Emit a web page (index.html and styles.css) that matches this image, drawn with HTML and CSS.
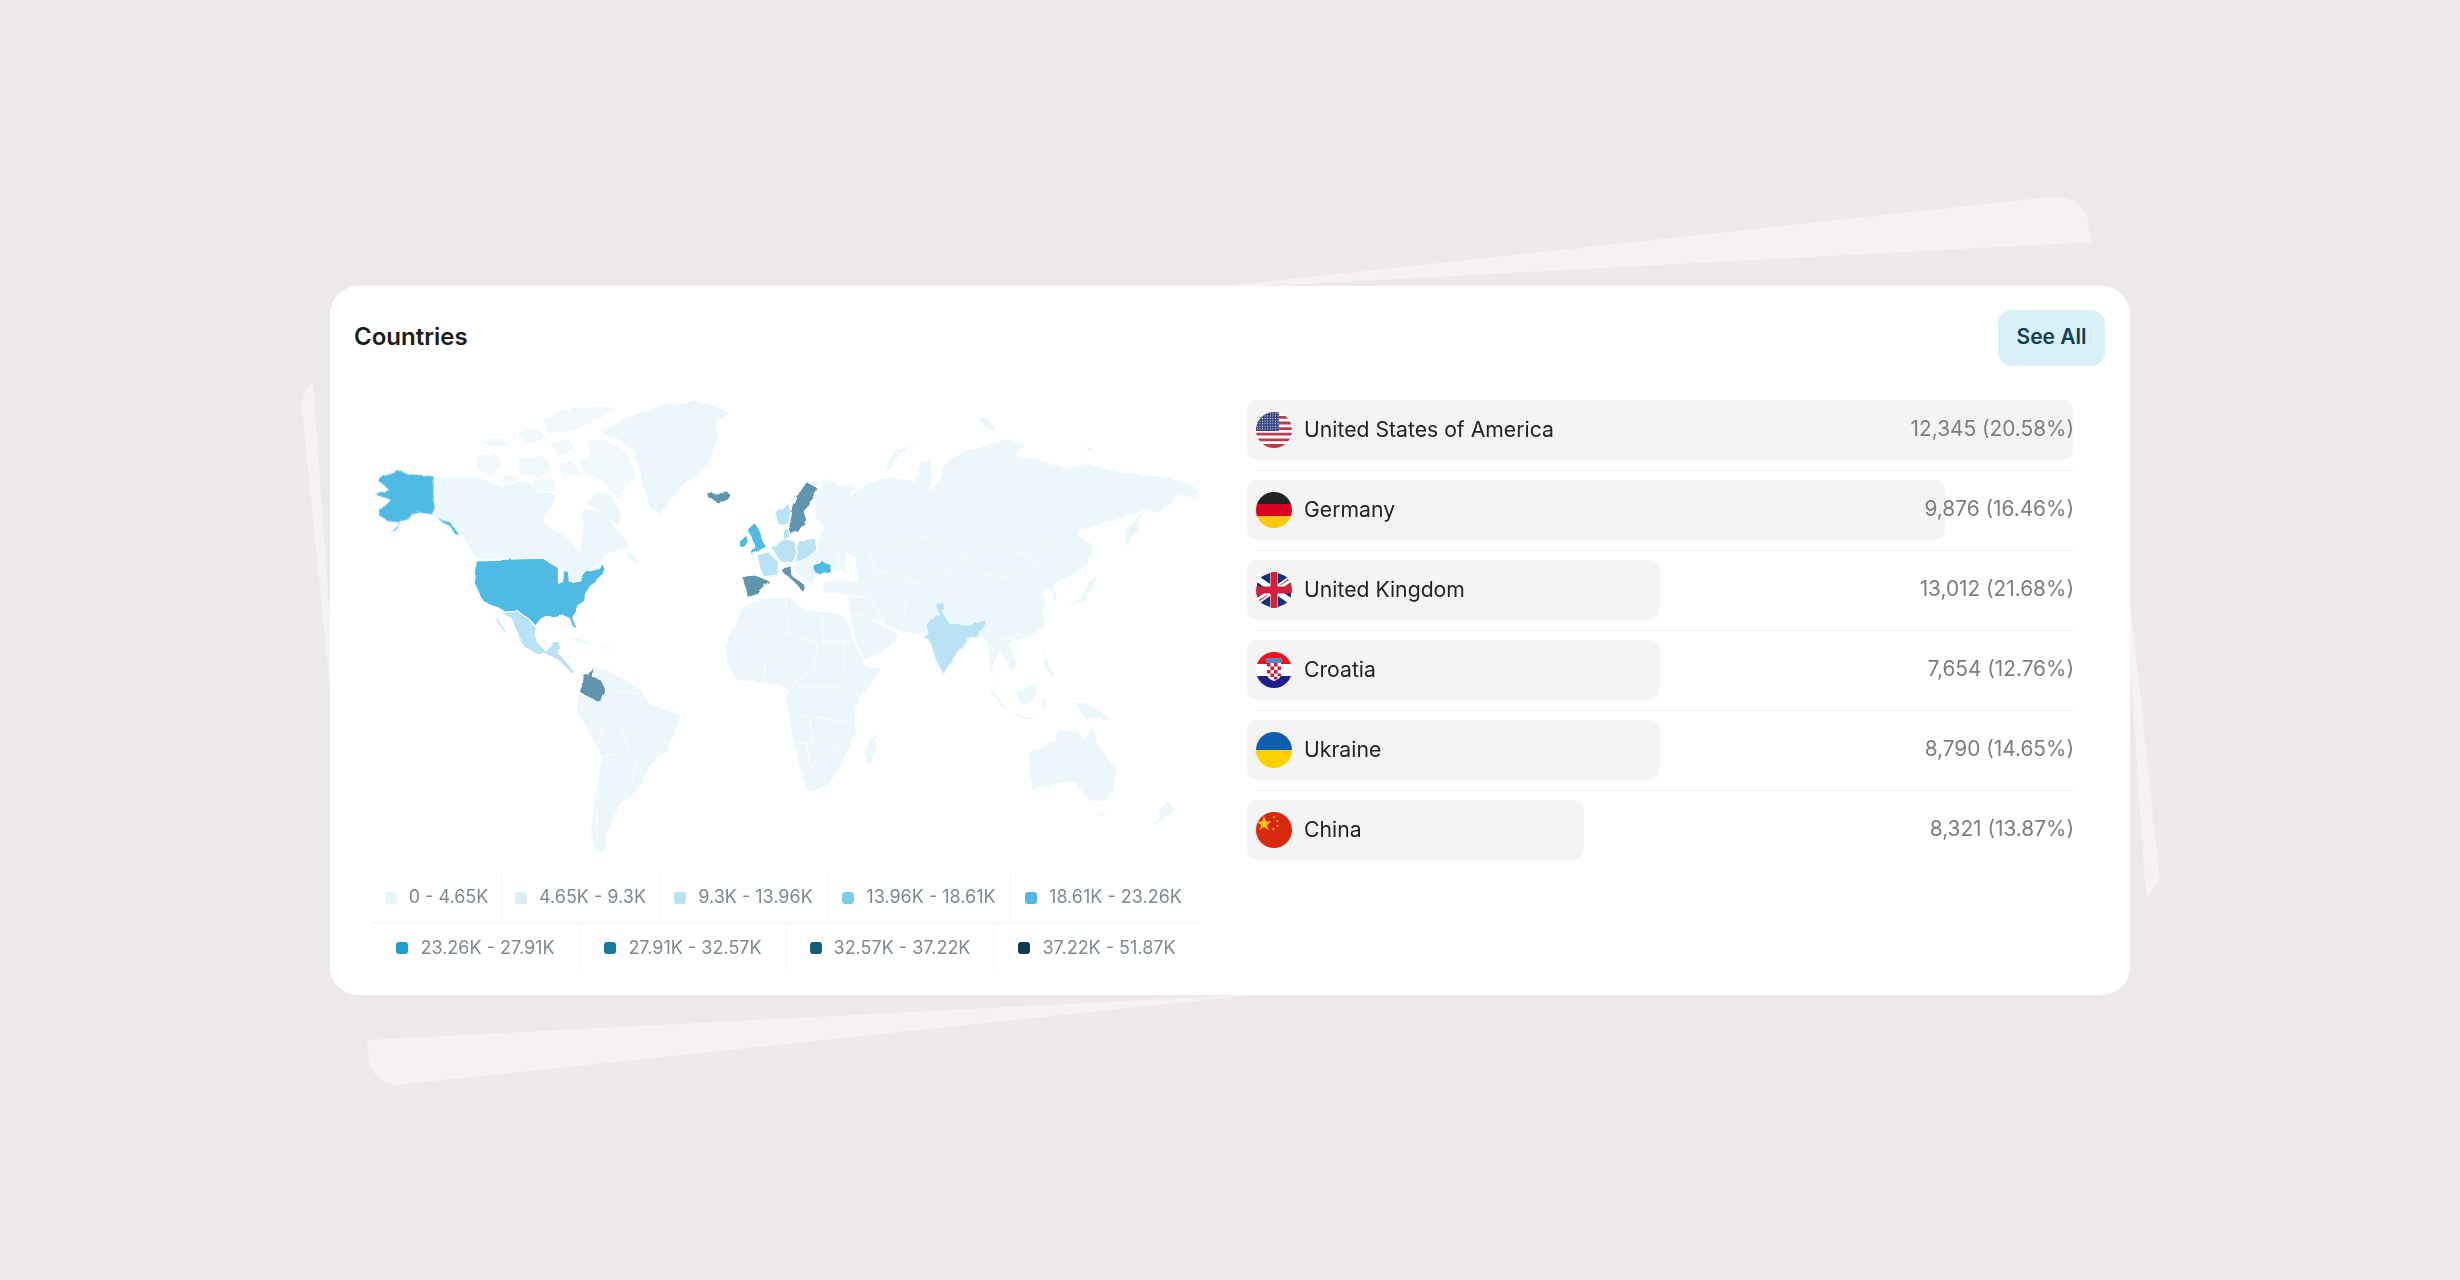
FILE: index.html

```html
<!DOCTYPE html>
<html lang="en">
<head>
  <meta charset="UTF-8" />
  <title>Countries</title>
  <link rel="stylesheet" href="styles.css">
</head>
<body>
  <!-- rotated sheets peeking out behind the card -->
  <svg class="backdrop" viewBox="0 0 2460 1280" aria-hidden="true">
    <path d="M1190 290 L2050 197 Q2084 194 2089 226 L2092 242 Z" />
    <path d="M330 690 L302 410 Q301 390 313 383 L330 620 Z" />
    <path d="M2130 600 L2159 870 Q2160 885 2146 898 L2130 660 Z" />
    <path d="M1262 994 L367 1040 L369 1060 Q372 1080 395 1085 Z" />
  </svg>

  <main class="card">
    <header class="card-head">
      <h1>Countries</h1>
      <button class="see-all">See All</button>
    </header>

    <div class="card-body">
      <section class="map-col">
        <svg class="world-map" viewBox="372 400 828 463" role="img" aria-label="World map">
          <defs>
            <filter id="coast" x="360" y="390" width="850" height="485" filterUnits="userSpaceOnUse">
              <feTurbulence type="fractalNoise" baseFrequency="0.09" numOctaves="2" seed="4" />
              <feDisplacementMap in="SourceGraphic" scale="4" />
              <feGaussianBlur stdDeviation="0.45" />
            </filter>
          </defs>

          <g filter="url(#coast)">
            <!-- north atlantic side -->
            <g transform="translate(430 395) scale(.3333)">
              <g class="land l0">
                <polygon points="515,115 580,70 690,30 800,15 905,50 860,80 865,130 840,200 790,250 720,310 690,360 660,340 640,280 610,170 570,135" />
                <polygon points="15,245 130,245 210,270 290,260 340,285 380,300 375,325 340,360 345,385 400,420 425,440 445,465 458,420 462,395 450,350 490,340 520,345 545,380 575,420 605,455 555,465 530,480 515,505 470,530 450,555 418,560 415,530 385,518 362,505 340,490 135,490 100,430 80,410 50,380 15,365" />
                <polygon points="470,330 500,290 540,300 570,340 570,400 545,380 510,345" />
                <polygon points="590,470 615,480 625,505 595,495" />
                <polygon points="400,725 450,730 500,750 450,745" />
                <polygon points="510,755 540,755 540,765" />
                <polygon points="935,555 945,570 952,605 940,600" />
              </g>
              <g class="land arctic">
                <polygon points="340,70 430,35 555,35 500,75 450,100 400,115 350,110" />
                <polygon points="470,140 520,130 590,170 620,250 560,310 520,260 470,240 440,200 480,180" />
                <polygon points="260,190 340,180 370,220 330,250 270,240" />
                <polygon points="135,185 200,175 220,210 180,240 140,220" />
                <polygon points="150,140 210,125 250,150 190,160" />
                <polygon points="260,110 320,95 350,130 290,150" />
                <polygon points="360,140 420,130 440,170 380,180" />
                <polygon points="380,200 430,200 450,240 400,250" />
                <polygon points="230,230 260,250 240,270 210,260" />
                <polygon points="300,260 370,250 380,290 320,290" />
              </g>
              <g class="land l2">
                <polygon points="187,645 230,650 265,650 295,670 315,695 320,740 345,765 370,740 390,740 385,775 410,800 440,840 425,835 390,800 345,775 325,780 280,755 265,720 245,670 210,650" />
                <polygon points="190,650 215,690 235,720 225,715 200,680" />
              </g>
              <g class="land l4">
                <polygon points="135,495 340,490 362,505 385,518 385,565 398,560 402,525 415,530 418,560 450,555 470,530 510,520 515,505 525,520 520,535 495,560 480,575 465,600 468,620 440,640 425,665 440,695 432,700 418,670 395,660 370,665 345,665 320,680 315,690 295,670 265,650 230,650 190,635 155,615 145,590 133,565 138,520" />
                <polygon points="960,395 975,383 985,400 1000,440 1010,455 975,475 960,480 975,455 965,425 955,410" />
                <polygon points="928,440 950,420 955,440 945,455 930,460" />
              </g>
              <g class="land dim">
                <polygon points="935,545 975,540 1020,558 985,590 978,600 952,608 945,570" />
                <polygon points="830,295 845,290 850,295 890,288 903,300 895,315 865,327 845,312 833,308" />
              </g>
            </g>

            <!-- alaska -->
            <g class="land l4" transform="translate(280 350) scale(.3333)">
              <polygon points="360,360 385,370 462,378 462,498 440,495 415,487 400,490 385,510 360,515 345,540 302,565 330,545 355,518 325,515 298,500 295,480 320,462 330,450 300,440 282,433 300,425 325,420 310,405 292,392 315,375 340,368" />
              <polygon points="462,498 490,510 510,515 540,555 525,555 510,530 490,520" />
            </g>

            <!-- asia -->
            <g transform="translate(850 410) scale(.3333)">
              <g class="land l0">
                <polygon points="0,265 60,215 130,200 195,215 210,160 240,150 250,200 240,240 265,215 285,160 330,130 400,105 470,85 525,105 490,140 560,145 650,175 720,160 800,185 880,195 960,200 1020,225 1055,245 1030,265 990,255 960,280 930,310 890,300 830,320 700,360 685,380 725,400 730,440 690,480 640,510 610,530 625,575 610,570 600,535 570,545 590,570 580,600 585,650 540,680 480,700 500,770 480,780 450,720 430,770 430,820 470,890 440,830 420,780 410,700 395,680 355,700 320,730 280,795 245,710 225,670 160,670 100,640 60,590 20,570 0,560 -30,550 -80,550 -85,520 -40,505 -10,510 0,500 -30,480 -90,480 -105,500 -115,525 -135,510 -168,486 -165,459 -99,420 -96,381 -75,351 -100,330 -110,260 -75,205 -40,220 20,235" />
                <polygon points="650,590 700,560 720,510 745,490 725,540 710,570 660,590" />
                <polygon points="825,400 830,360 880,300 860,360 835,410" />
                <polygon points="105,180 140,120 215,95 150,130 125,180" />
                <polygon points="380,25 410,20 440,60 410,55" />
                <polygon points="695,110 740,115 720,125" />
                <polygon points="990,180 1005,178 1000,185" />
              </g>
              <g class="borders">
                <polyline points="60,430 160,400 225,380 280,410 340,440 310,470 260,500 200,520 150,480 100,490 70,470 60,430" />
                <polyline points="345,440 430,410 530,435 570,460 520,480 460,505 400,490 370,470 345,440" />
                <polyline points="530,435 590,400 620,410 660,460 640,500" />
                <polyline points="20,540 90,480 130,510 200,520" />
                <polyline points="120,540 165,570 160,650" />
                <polyline points="40,560 70,600 110,640" />
                <polyline points="250,530 300,480" />
                <polyline points="390,640 450,690 540,670" />
                <polyline points="430,690 470,770" />
                <polyline points="-96,381 -40,400 -30,480" />
                <polyline points="-60,440 0,470" />
              </g>
              <polygon class="water" points="-10,430 15,440 25,515 0,520 -15,480" />
              <g class="land l2">
                <polygon points="255,580 280,578 285,595 275,605 300,640 355,645 405,628 410,640 385,680 355,690 325,725 300,760 280,795 255,745 240,695 218,680 235,670 225,645 265,610" />
              </g>
            </g>

            <!-- southern continents -->
            <g transform="translate(560 590) scale(.357 .3333)">
              <g class="land l0">
                <polygon points="95,235 135,240 175,265 230,300 250,340 340,375 320,430 300,480 250,530 235,570 200,620 170,640 130,730 125,790 100,785 85,730 95,620 115,500 90,445 45,360 50,320" />
                <polygon points="510,50 570,25 640,20 690,60 770,70 800,80 830,170 855,225 900,235 875,280 840,320 825,370 830,430 780,540 750,590 695,605 670,530 650,440 630,320 640,300 605,285 540,275 500,275 465,220 465,150" />
                <polygon points="810,70 870,85 950,135 935,165 850,215 830,160" />
                <polygon points="805,20 868,20 900,80 875,90 810,70" />
                <polygon points="890,425 885,470 875,520 852,520 855,470" />
                <polygon points="1195,285 1230,320 1255,365 1240,355 1210,315" />
                <polygon points="1260,370 1340,385 1300,390" />
                <polygon points="1280,310 1335,275 1330,330 1290,345" />
                <polygon points="1345,320 1365,325 1355,365" />
                <polygon points="1430,330 1490,345 1555,395 1510,385 1470,385 1450,350" />
                <polygon points="1355,175 1365,210 1385,250 1380,270 1355,225" />
                <polygon points="1085,255 1095,265 1085,270" />
                <polygon points="1310,490 1380,450 1395,420 1450,420 1465,450 1490,410 1510,470 1560,540 1550,600 1525,635 1480,635 1445,580 1400,575 1320,605" />
                <polygon points="1510,665 1530,665 1520,682" />
              </g>
              <g class="borders">
                <polyline points="90,370 130,395 170,400 190,470 215,530 180,630" />
                <polyline points="115,440 120,395" />
                <polyline points="115,500 170,490 215,530" />
                <polyline points="130,300 210,310 240,310" />
                <polyline points="90,370 105,340" />
                <polyline points="115,500 100,650 105,760" />
                <polyline points="510,100 600,170 575,215 575,280" />
                <polyline points="630,20 640,125 600,170" />
                <polyline points="640,125 720,160 710,240 665,270 630,320" />
                <polyline points="735,60 735,150 800,150" />
                <polyline points="720,160 800,150 790,240 830,290" />
                <polyline points="665,290 790,290 840,320" />
                <polyline points="650,370 700,380 710,460 650,460" />
                <polyline points="710,380 820,400 800,450 700,530 690,460" />
                <polyline points="760,450 780,500" />
              </g>
              <g class="land dim">
                <polygon points="97,228 85,245 62,255 58,310 85,325 112,340 127,295 115,270 90,260" />
              </g>
            </g>

            <!-- europe and the far south east -->
            <g transform="translate(340 380) scale(.5485 .3333)">
              <g class="land l0">
                <polygon points="826,372 845,325 880,305 900,275 880,300 850,305 836,335 818,372" />
                <polygon points="1480,1340 1508,1260 1522,1285 1500,1320" />
              </g>
              <g class="land l2">
                <polygon points="793,395 817,370 823,395 817,435 799,435" />
                <polygon points="787,505 811,475 829,485 833,520 823,545 802,545" />
                <polygon points="836,480 866,475 870,510 851,535 830,548 833,520" />
                <polygon points="760,525 781,515 799,545 799,585 772,590 766,560" />
                <polygon points="808,450 818,445 820,475 808,478" />
              </g>
              <g class="land l4">
                <polygon points="862,555 881,545 896,555 893,575 875,582 863,575" />
              </g>
              <g class="land dim">
                <polygon points="851,305 869,320 866,350 845,390 851,420 836,455 820,465 819,430 826,380 836,340" />
                <polygon points="803,565 823,558 826,590 848,615 842,638 836,620 820,595 808,580" />
              </g>
            </g>
          </g>
        </svg>

        <div class="legend">
          <div class="legend-row first">
            <span class="legend-item"><i class="swatch s1"></i>0 - 4.65K</span>
            <span class="legend-item"><i class="swatch s2"></i>4.65K - 9.3K</span>
            <span class="legend-item"><i class="swatch s3"></i>9.3K - 13.96K</span>
            <span class="legend-item"><i class="swatch s4"></i>13.96K - 18.61K</span>
            <span class="legend-item"><i class="swatch s5"></i>18.61K - 23.26K</span>
          </div>
          <div class="legend-row second">
            <span class="legend-item"><i class="swatch s6"></i>23.26K - 27.91K</span>
            <span class="legend-item"><i class="swatch s7"></i>27.91K - 32.57K</span>
            <span class="legend-item"><i class="swatch s8"></i>32.57K - 37.22K</span>
            <span class="legend-item"><i class="swatch s9"></i>37.22K - 51.87K</span>
          </div>
        </div>
      </section>

      <ul class="country-list">
        <li class="country">
          <div class="bar" style="width: 99.6%"></div>
          <div class="country-line">
            <svg class="flag" viewBox="0 0 36 36">
              <defs>
                <pattern id="stars" width="2.6" height="2.6" patternUnits="userSpaceOnUse"><circle cx="1.3" cy="1.3" r=".55" fill="#fff" /></pattern>
              </defs>
              <rect width="36" height="36" fill="#fff" />
              <path d="M0 4h36v2.800H0zM0 9.600h36v2.800H0zM0 15.200h36v2.800H0zM0 20.800h36v2.800H0zM0 26.400h36v2.800H0zM0 32h36v4H0z" fill="#c0384c" />
              <rect width="23" height="19" fill="#34447f" />
              <rect width="23" height="19" fill="url(#stars)" />
            </svg>
            <span class="name">United States of America</span>
            <span class="value">12,345 (20.58%)</span>
          </div>
        </li>
        <li class="country">
          <div class="bar" style="width: 84.2%"></div>
          <div class="country-line">
            <svg class="flag" viewBox="0 0 36 36">
              <rect width="36" height="12" fill="#222" />
              <rect y="12" width="36" height="12" fill="#d8001e" />
              <rect y="24" width="36" height="12" fill="#fcc80e" />
            </svg>
            <span class="name">Germany</span>
            <span class="value">9,876 (16.46%)</span>
          </div>
        </li>
        <li class="country">
          <div class="bar" style="width: 49.8%"></div>
          <div class="country-line">
            <svg class="flag" viewBox="0 0 36 36">
              <rect width="36" height="36" fill="#fff" />
              <path d="M4 5l10 7V1zM32 5l-10 7V1zM1 10l7 5H1zM35 10l-7 5h7zM4 31l10-7v11zM32 31l-10-7v11zM1 26l7-5H1zM35 26l-7-5h7z" fill="#12337a" />
              <path d="M0 21h7l-7 5zM36 15h-7l7-5zM24 13l8-6 1 1-8 5zM12 23l-8 6-1-1 8-5z" fill="#d0203a" />
              <rect x="14.500" width="7" height="36" fill="#d0203a" />
              <rect y="14.500" width="36" height="7" fill="#d0203a" />
            </svg>
            <span class="name">United Kingdom</span>
            <span class="value">13,012 (21.68%)</span>
          </div>
        </li>
        <li class="country">
          <div class="bar" style="width: 49.8%"></div>
          <div class="country-line">
            <svg class="flag" viewBox="0 0 36 36">
              <rect width="36" height="12" fill="#f01020" />
              <rect y="12" width="36" height="12" fill="#fff" />
              <rect y="24" width="36" height="12" fill="#1c1c8c" />
              <rect x="10" y="6" width="16" height="5" rx="1" fill="#5a86c4" />
              <path d="M11 11h14v11q0 5-7 7-7-2-7-7z" fill="#fff" />
              <path d="M11 11h3.500v3.500H11zM18 11h3.500v3.500H18zM14.500 14.500H18V18h-3.500zM21.500 14.500H25V18h-3.500zM11 18h3.500v3.500H11zM18 18h3.500v3.500H18zM14.500 21.500H18V25h-3.500zM21.500 21.500H25V24h-3.500zM18 25h3.500v2.500H18z" fill="#d81830" />
            </svg>
            <span class="name">Croatia</span>
            <span class="value">7,654 (12.76%)</span>
          </div>
        </li>
        <li class="country">
          <div class="bar" style="width: 49.8%"></div>
          <div class="country-line">
            <svg class="flag" viewBox="0 0 36 36">
              <rect width="36" height="18" fill="#0d5eaf" />
              <rect y="18" width="36" height="18" fill="#fdd000" />
            </svg>
            <span class="name">Ukraine</span>
            <span class="value">8,790 (14.65%)</span>
          </div>
        </li>
        <li class="country">
          <div class="bar" style="width: 40.6%"></div>
          <div class="country-line">
            <svg class="flag" viewBox="0 0 36 36">
              <rect width="36" height="36" fill="#d8290f" />
              <polygon points="8,4 9.800,9.500 15.500,9.500 10.900,12.900 12.600,18.300 8,15 3.400,18.300 5.100,12.900 .500,9.500 6.200,9.500" fill="#fcc80e" />
              <g fill="#fcc80e">
                <circle cx="18" cy="5" r="1" />
                <circle cx="21.500" cy="9" r="1" />
                <circle cx="21.500" cy="14" r="1" />
                <circle cx="17.500" cy="17" r="1" />
              </g>
            </svg>
            <span class="name">China</span>
            <span class="value">8,321 (13.87%)</span>
          </div>
        </li>
      </ul>
    </div>
  </main>
</body>
</html>
```

FILE: styles.css

```css
* {
  box-sizing: border-box;
}

html, body {
  margin: 0;
  padding: 0;
}

body {
  position: relative;
  width: 2460px;
  height: 1280px;
  padding: 286px 330px 0;
  overflow: hidden;
  background: #eee9e9;
  font-family: 'Inter', 'Liberation Sans', sans-serif;
}

.backdrop {
  position: absolute;
  top: 0;
  left: 0;
  width: 2460px;
  height: 1280px;
}

.backdrop path {
  fill: #f6f2f3;
}

.card {
  position: relative;
  width: 1800px;
  padding: 24px 25px 23px 24px;
  background: #fff;
  border-radius: 28px;
}

.card-head {
  display: flex;
  align-items: center;
  justify-content: space-between;
  height: 56px;
}

.card-head h1 {
  margin: 0;
  padding-bottom: 4px;
  font-size: 24px;
  font-weight: 600;
  color: #1c1c1c;
}

.see-all {
  width: 107px;
  height: 56px;
  padding: 0 0 3px;
  border: none;
  border-radius: 14px;
  background: #daf0f8;
  color: #0e3f52;
  font-family: inherit;
  font-size: 21px;
  font-weight: 600;
}

.card-body {
  display: flex;
  gap: 47px;
  margin-top: 34px;
  padding-left: 18px;
}

.map-col {
  flex: none;
  width: 828px;
}

.world-map {
  display: block;
  width: 828px;
  height: 463px;
}

.land polygon {
  stroke: #fff;
  stroke-width: 1px;
  vector-effect: non-scaling-stroke;
}

.l0 polygon { fill: #ecf7fb; }
.arctic polygon { fill: #f1f9fc; }
.l2 polygon { fill: #b9e3f5; }
.l4 polygon { fill: #50bbe4; }
.dim polygon { fill: #6196ad; }

.borders polyline {
  fill: none;
  stroke: #fff;
  stroke-width: 1px;
  stroke-opacity: .8;
  vector-effect: non-scaling-stroke;
}

.water {
  fill: #fff;
}

.legend {
  margin-top: 10px;
}

.legend-row {
  display: grid;
  height: 49px;
}

.legend-row.first {
  grid-template-columns: 129px 158px 168px 183px 186px;
}

.legend-row.second {
  grid-template-columns: repeat(4, 1fr);
  height: 50px;
  border-top: 2px solid #f5f6f7;
}

.legend-item {
  display: flex;
  align-items: center;
  justify-content: center;
  gap: 12px;
  padding-bottom: 2px;
  color: #7e8a90;
  font-size: 18px;
  white-space: nowrap;
}

.legend-item + .legend-item {
  border-left: 1px solid #f5f6f7;
}

.swatch {
  width: 12px;
  height: 12px;
  margin-top: 2px;
  border-radius: 3px;
}

.s1 { background: #eaf5fb; }
.s2 { background: #d7eef8; }
.s3 { background: #b7e2f4; }
.s4 { background: #7ccdec; }
.s5 { background: #4eb8e3; }
.s6 { background: #1f9fd0; }
.s7 { background: #17799f; }
.s8 { background: #135e7a; }
.s9 { background: #0e3b4f; }

.country-list {
  flex: none;
  width: 829px;
  margin: 0;
  padding: 0;
  list-style: none;
}

.country {
  display: grid;
  height: 80px;
  grid-template-rows: 60px 10px 1px;
}

.country::after {
  content: "";
  grid-row: 3;
  margin-left: 9px;
  background: #f4f2f2;
}

.country:last-child::after {
  display: none;
}

.bar,
.country-line {
  grid-row: 1;
  grid-column: 1;
}

.bar {
  height: 60px;
  border-radius: 10px;
  background: #f6f3f4;
}

.country-line {
  display: flex;
  align-items: center;
  gap: 12px;
  padding: 0 2px 0 9px;
}

.flag {
  width: 36px;
  height: 36px;
  border-radius: 50%;
  flex: none;
}

.name {
  flex: 1;
  padding-bottom: 3px;
  color: #222;
  font-size: 21.200px;
}

.value {
  padding-bottom: 3px;
  color: #7d7d7d;
  font-size: 20.800px;
}
```
